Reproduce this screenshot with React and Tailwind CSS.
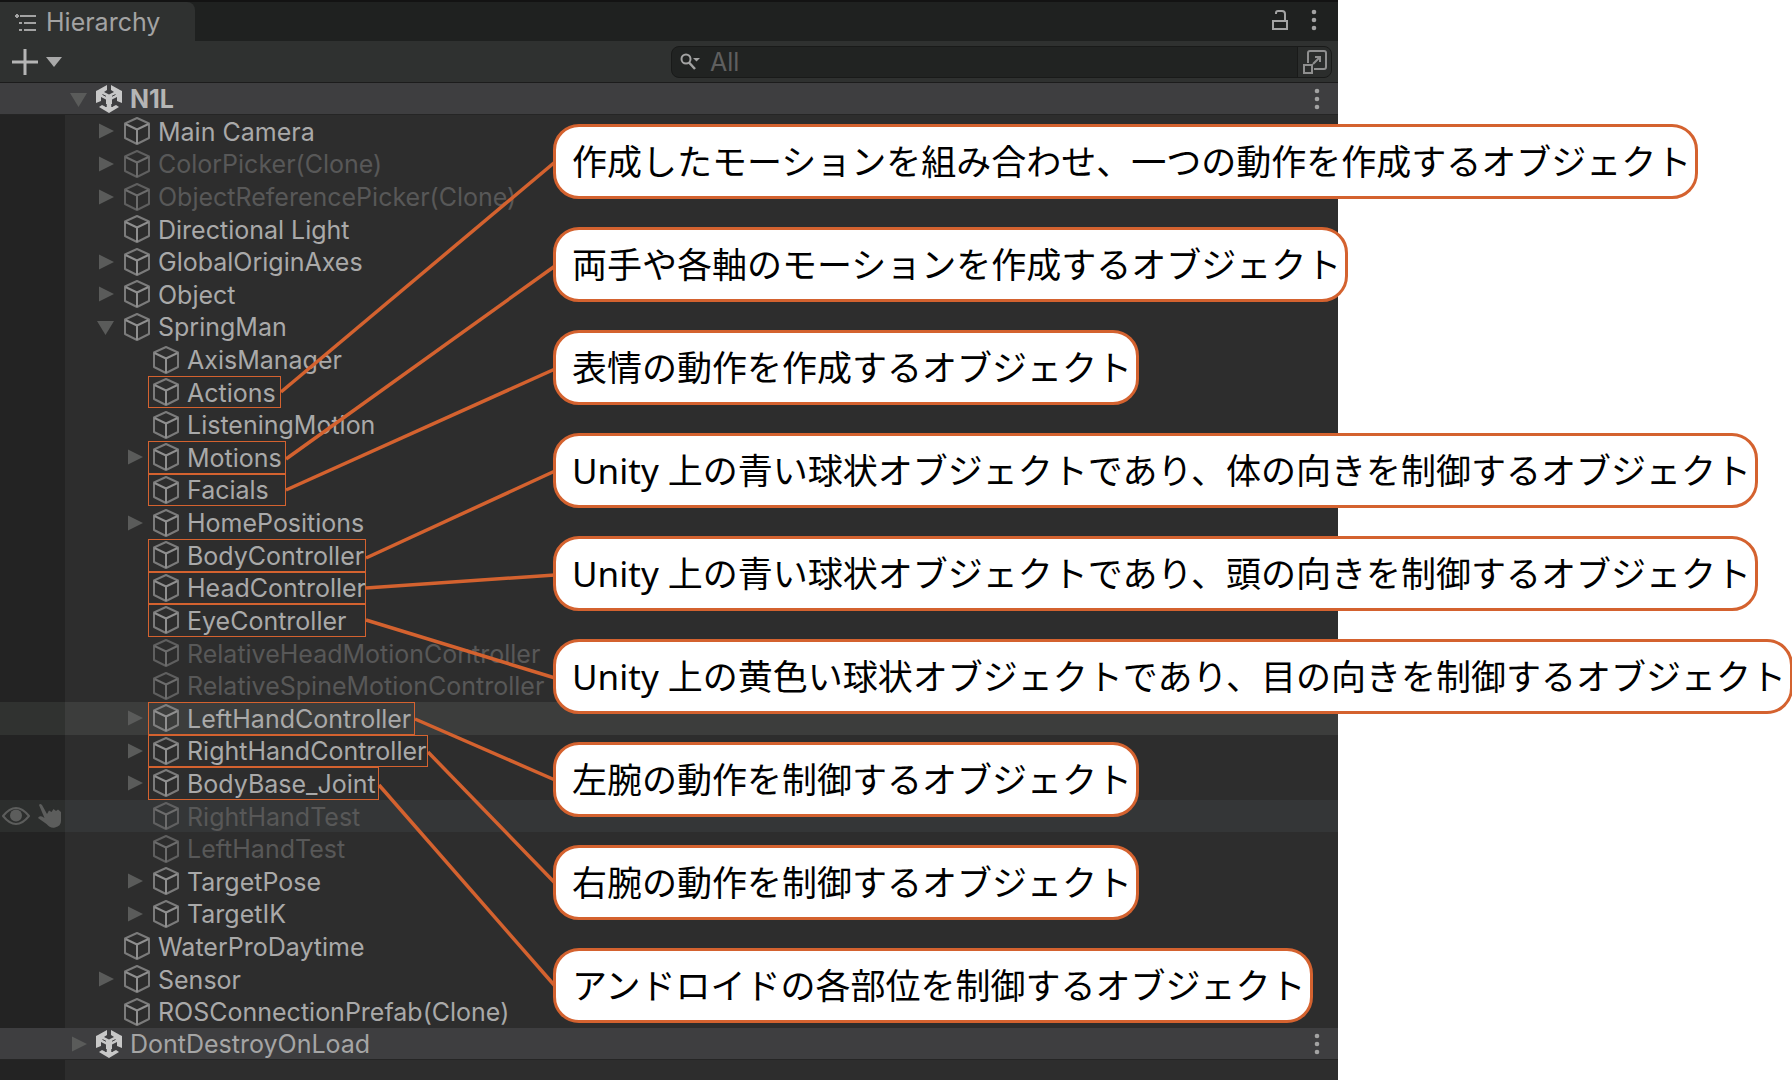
import React from "react";

const ROWS = [
  { label: "Main Camera", depth: 1, fold: "closed" },
  { label: "ColorPicker(Clone)", depth: 1, fold: "closed", dim: true },
  { label: "ObjectReferencePicker(Clone)", depth: 1, fold: "closed", dim: true },
  { label: "Directional Light", depth: 1 },
  { label: "GlobalOriginAxes", depth: 1, fold: "closed" },
  { label: "Object", depth: 1, fold: "closed" },
  { label: "SpringMan", depth: 1, fold: "open" },
  { label: "AxisManager", depth: 2 },
  { label: "Actions", depth: 2, box: "w-[133px]" },
  { label: "ListeningMotion", depth: 2 },
  { label: "Motions", depth: 2, fold: "closed", box: "w-[138px]" },
  { label: "Facials", depth: 2, box: "w-[138px]" },
  { label: "HomePositions", depth: 2, fold: "closed" },
  { label: "BodyController", depth: 2, box: "w-[218px]" },
  { label: "HeadController", depth: 2, box: "w-[218px]" },
  { label: "EyeController", depth: 2, box: "w-[218px]" },
  { label: "RelativeHeadMotionController", depth: 2, dim: true },
  { label: "RelativeSpineMotionController", depth: 2, dim: true },
  { label: "LeftHandController", depth: 2, fold: "closed", box: "w-[267px]", state: "selected" },
  { label: "RightHandController", depth: 2, fold: "closed", box: "w-[280px]" },
  { label: "BodyBase_Joint", depth: 2, fold: "closed", box: "w-[231px]" },
  { label: "RightHandTest", depth: 2, dim: true, state: "hover" },
  { label: "LeftHandTest", depth: 2, dim: true },
  { label: "TargetPose", depth: 2, fold: "closed" },
  { label: "TargetIK", depth: 2, fold: "closed" },
  { label: "WaterProDaytime", depth: 1 },
  { label: "Sensor", depth: 1, fold: "closed" },
  { label: "ROSConnectionPrefab(Clone)", depth: 1 },
];

const CALLOUTS = [
  { text: "作成したモーションを組み合わせ、一つの動作を作成するオブジェクト", line: [281, 392, 555, 162] },
  { text: "両手や各軸のモーションを作成するオブジェクト", line: [286, 459, 555, 266] },
  { text: "表情の動作を作成するオブジェクト", line: [286, 490, 555, 369] },
  { text: "Unity 上の青い球状オブジェクトであり、体の向きを制御するオブジェクト", line: [366, 558, 555, 471] },
  { text: "Unity 上の青い球状オブジェクトであり、頭の向きを制御するオブジェクト", line: [366, 588, 555, 575] },
  { text: "Unity 上の黄色い球状オブジェクトであり、目の向きを制御するオブジェクト", line: [366, 620, 555, 678] },
  { text: "左腕の動作を制御するオブジェクト", line: [415, 719, 555, 780] },
  { text: "右腕の動作を制御するオブジェクト", line: [428, 752, 555, 883] },
  { text: "アンドロイドの各部位を制御するオブジェクト", line: [379, 785, 555, 986] },
];

function Cube({ dim }) {
  return (
    <svg viewBox="0 0 28 30" className={`h-[30px] w-7 shrink-0 ${dim ? "text-[#6c6c6c]" : "text-[#8f8f8f]"}`} fill="none" stroke="currentColor" strokeWidth="2" strokeLinejoin="round" aria-hidden="true">
      <path d="M14 2 26 7.500V22L14 28 2 22V7.500Z" opacity="0.8" />
      <path d="M2.500 8 14 13.500 25.500 8M14 13.500V28" />
    </svg>
  );
}

function UnityLogo() {
  return (
    <svg viewBox="0 0 28 30" className="h-[30px] w-7 shrink-0" fill="#c8c8c8" aria-hidden="true">
      <path d="M12 1V6L9 8 14 10.500 19 8 16 6V1L25 6 27 7V19L22 17V13L17 15.500V23L21 21 24 23 14 29 4 23 7 21 11 23V15.500L6 13V17L1 19V7L3 6Z" />
      <path d="M7.500 10.500 11 12.300M20.500 10.500 17 12.300" stroke="#3e3e40" strokeWidth="1" />
      <path d="M11 20V23M17 20V23" stroke="#3e3e40" strokeWidth="1.500" />
    </svg>
  );
}

function Foldout({ state, label }) {
  if (!state) return <span className="w-5 shrink-0" />;
  return (
    <button type="button" aria-label={`Toggle ${label}`} className="flex h-5 w-5 shrink-0 items-center justify-center text-[#5a5b5a]">
      <svg viewBox="0 0 20 20" className="h-5 w-5" fill="currentColor" aria-hidden="true">
        {state === "open" ? <path d="M1 4H18L9.500 18Z" /> : <path d="M3 2.500V17.500L18 10Z" />}
      </svg>
    </button>
  );
}

function Dots() {
  return (
    <svg viewBox="0 0 6 22" className="h-[22px] w-1.5" fill="#a3a3a3" aria-hidden="true">
      <circle cx="3" cy="3" r="2.300" />
      <circle cx="3" cy="11" r="2.300" />
      <circle cx="3" cy="19" r="2.300" />
    </svg>
  );
}

function SceneHeader({ label, fold, bold }) {
  return (
    <div className="flex h-8 shrink-0 items-center border-b border-[#252525] bg-[#3e3e40] pr-[18px] pl-[69px]">
      <Foldout state={fold} label={label} />
      <div className="ml-1.5 flex items-center gap-[7px]">
        <UnityLogo />
        <span className={`pt-0.5 ${bold ? "font-bold text-[#b5b5b5]" : "text-[#a5a5a5]"}`}>{label}</span>
      </div>
      <button type="button" aria-label={`${label} menu`} className="ml-auto">
        <Dots />
      </button>
    </div>
  );
}

function Row({ row }) {
  const bg = row.state === "selected" ? "bg-[#3c3d3c]" : row.state === "hover" ? "bg-[#343637]" : "";
  const gutter = row.state === "selected" ? "bg-[#303230]" : row.state === "hover" ? "bg-[#2c2e2d]" : "bg-[#232323]";
  return (
    <li className={`flex min-h-8 items-stretch ${bg}`}>
      <div className={`flex w-[65px] shrink-0 items-center gap-2 pl-0.5 ${gutter}`}>
        {row.state === "hover" && (
          <>
            <button type="button" aria-label="Toggle visibility">
              <svg viewBox="0 0 28 20" className="h-5 w-7" fill="none" stroke="#5c5d5c" strokeWidth="2" aria-hidden="true">
                <path d="M1 10Q14-6 27 10Q14 26 1 10Z" />
                <circle cx="14" cy="9.500" r="6" fill="#5c5d5c" stroke="none" />
              </svg>
            </button>
            <button type="button" aria-label="Toggle picking">
              <svg viewBox="0 0 24 26" className="h-[26px] w-6" fill="#5c5d5c" aria-hidden="true">
                <path d="M1 2Q2 0 4 2L9 11 11 7.500 13.500 9 15.500 6 18 8 20 6.500 23 9V18Q23 23 17 24.500 12 25.500 8.500 21L0 15Q1 12.500 4 13.500L6.500 15Z" />
              </svg>
            </button>
          </>
        )}
      </div>
      <div className={`flex items-center gap-[3px] ${row.depth === 1 ? "pl-[31px]" : "pl-[60px]"}`}>
        <Foldout state={row.fold} label={row.label} />
        <div className={`flex items-center gap-[7px] self-stretch border pl-[3px] ${row.box ? `border-[#d4622f] ${row.box}` : "border-transparent"}`}>
          <Cube dim={row.dim} />
          <span className={`pt-0.5 ${row.dim ? "text-[#585858]" : "text-[#a9a9a9]"}`}>{row.label}</span>
        </div>
      </div>
    </li>
  );
}

function Hierarchy() {
  return (
    <section aria-label="Hierarchy" className="flex min-h-screen w-[1338px] shrink-0 flex-col bg-[#2d2d2d]">
      <header className="shrink-0 border-b border-[#1c1c1c]">
        <div className="flex h-[41px] items-end justify-between border-t-2 border-[#131313] bg-[#1f2120]">
          <h1 className="flex h-full w-[195px] items-center gap-2 rounded-tr-lg bg-[#2f3130] pt-0.5 pl-3.5 text-[#a3a3a3]">
            <svg viewBox="0 0 24 20" className="h-5 w-6" fill="none" stroke="#a3a3a3" strokeWidth="2" aria-hidden="true">
              <path d="M6 3H22M10 10H22M10 17H22" />
              <path d="M1 3H5M3 1V5M5 10H8M5 17H8" />
            </svg>
            Hierarchy
          </h1>
          <div className="flex h-full items-center gap-[22px] pr-[21px] pb-1">
            <button type="button" aria-label="Lock">
              <svg viewBox="0 0 18 22" className="h-[22px] w-[18px]" fill="none" stroke="#a3a3a3" strokeWidth="2" aria-hidden="true">
                <path d="M2 12H16V20H2Z" />
                <path d="M5 5V4Q5 2 7 2H11Q14 2 14 5V12" />
              </svg>
            </button>
            <button type="button" aria-label="Window menu">
              <Dots />
            </button>
          </div>
        </div>
        <div className="flex h-[41px] items-center justify-between bg-[#2f3130] pr-1.5 pl-3">
          <button type="button" aria-label="Create" className="flex items-center gap-2">
            <svg viewBox="0 0 26 26" className="h-[26px] w-[26px]" stroke="#b5b5b5" strokeWidth="3" aria-hidden="true">
              <path d="M13 0V26M0 13H26" />
            </svg>
            <svg viewBox="0 0 16 10" className="h-2.5 w-4" fill="#a9a9a9" aria-hidden="true">
              <path d="M0 0H16L8 10Z" />
            </svg>
          </button>
          <div className="flex h-8 w-[661px] items-stretch overflow-hidden rounded-lg border border-[#191a19] bg-[#212322]">
            <label htmlFor="search" aria-label="Search" className="flex items-center pl-2">
              <svg viewBox="0 0 20 18" className="h-[18px] w-5" fill="none" stroke="#a3a3a3" strokeWidth="2" aria-hidden="true">
                <circle cx="6" cy="6" r="4.500" />
                <path d="M9 9.500 15 16" strokeWidth="2.500" />
                <path d="M13 5H20L16.500 8.500Z" fill="#a3a3a3" stroke="none" />
              </svg>
            </label>
            <input id="search" type="text" aria-label="Search" placeholder="All" className="h-[30px] min-w-0 flex-1 bg-transparent pl-2.5 leading-[30px] outline-none placeholder:text-[#5f5f5f]" />
            <button type="button" aria-label="Open in search" className="flex w-[34px] items-center justify-center border-l border-[#191a19] bg-[#2b2d2c]">
              <svg viewBox="0 0 24 24" className="h-6 w-6" fill="none" stroke="#8f8f8f" strokeWidth="2" aria-hidden="true">
                <path d="M5 13V3Q5 1 7 1H21Q23 1 23 3V17Q23 19 21 19H11" />
                <path d="M1 15H9V23H1Z" />
                <path d="M10 14 17 7M12 7H17V12" />
              </svg>
            </button>
          </div>
        </div>
      </header>
      <SceneHeader label="N1L" fold="open" bold />
      <ul className="grid flex-1 auto-rows-fr">
        {ROWS.map((row) => (
          <Row key={row.label} row={row} />
        ))}
      </ul>
      <SceneHeader label="DontDestroyOnLoad" fold="closed" />
      <div className="h-5 w-[65px] shrink-0 bg-[#232323]" />
    </section>
  );
}

export default function App() {
  return (
    <main className="relative flex min-h-screen overflow-hidden bg-white font-['Inter',sans-serif] text-[25px] leading-none">
      <Hierarchy />
      <svg className="pointer-events-none absolute top-0 left-0 h-[1080px] w-[1792px]" viewBox="0 0 1792 1080" stroke="#d4622f" strokeWidth="3.5" aria-hidden="true">
        {CALLOUTS.map(({ text, line: [x1, y1, x2, y2] }) => (
          <line key={text} x1={x1} y1={y1} x2={x2} y2={y2} />
        ))}
      </svg>
      <div className="absolute top-[124px] left-[553px] flex flex-col items-start gap-7">
        {CALLOUTS.map(({ text }) => (
          <p key={text} lang="ja" className="flex h-[75px] items-center rounded-[26px] border-3 border-[#d4622f] bg-white pr-1 pl-4 font-['Noto_Sans','Noto_Sans_CJK_JP',sans-serif] text-[35px] whitespace-nowrap text-black">
            {text}
          </p>
        ))}
      </div>
    </main>
  );
}
